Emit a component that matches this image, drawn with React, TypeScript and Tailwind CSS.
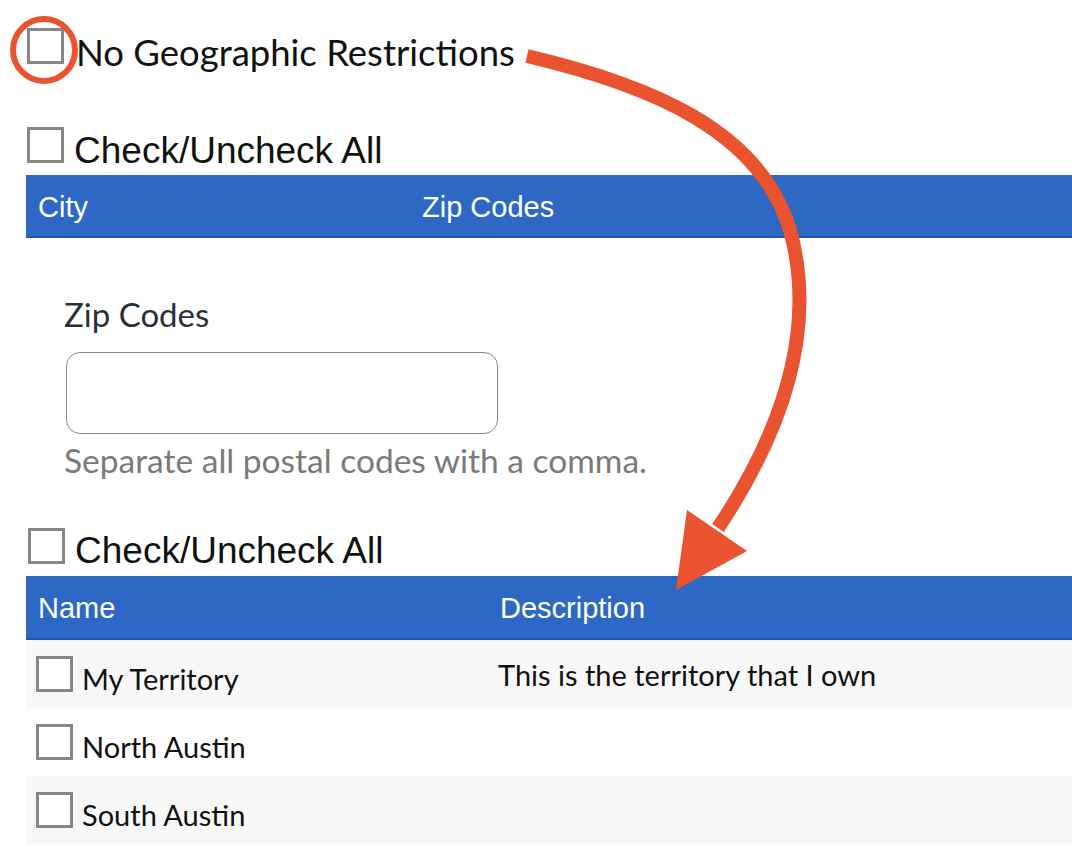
import React from "react";

const Box = ({ size = "w-[37px] h-[36px]" }: { size?: string }) => (
  <span className={`${size} shrink-0 border-[3px] border-[#878787] bg-white`} />
);

const rows = [
  { name: "My Territory", description: "This is the territory that I own" },
  { name: "North Austin", description: "" },
  { name: "South Austin", description: "" },
];

export default function App() {
  return (
    <div className="relative h-[846px] w-[1072px] overflow-hidden bg-white text-black">
      <div className="flex flex-col pl-[26px]">
        <label className="mt-[28px] flex items-center gap-[12px] pl-[1px]">
          <Box />
          <span className="translate-y-[6px] font-['Lato',sans-serif] text-[36.5px] leading-[36px] text-[#111]">
            No Geographic Restrictions
          </span>
        </label>

        <label className="mt-[63px] flex items-center gap-[10px] pl-[1px]">
          <Box />
          <span className="translate-y-[6px] font-['Liberation_Sans',sans-serif] text-[37px] leading-[36px] text-[#111]">
            Check/Uncheck All
          </span>
        </label>

        <div className="mt-[12px] flex h-[63px] items-center border-b-2 border-[#1c55bd] bg-[#2d68c4] font-['Liberation_Sans',sans-serif] text-[29px] text-white">
          <span className="w-[396px] translate-y-[2px] pl-[12px]">City</span>
          <span className="translate-y-[2px]">Zip Codes</span>
        </div>

        <div className="ml-[38px] mt-[56px] flex flex-col">
          <span className="font-['Lato',sans-serif] text-[33px] leading-[40px] text-[#2b2f3a]">Zip Codes</span>
          <div className="ml-[2px] mt-[18px] h-[82px] w-[432px] rounded-[14px] border border-[#8a8a8a]" />
          <span className="mt-[6px] font-['Lato',sans-serif] text-[33.5px] leading-[40px] text-[#7a7a7a]">
            Separate all postal codes with a comma.
          </span>
        </div>

        <label className="mt-[48px] flex items-center gap-[10px] pl-[2px]">
          <Box />
          <span className="translate-y-[5px] font-['Liberation_Sans',sans-serif] text-[37px] leading-[36px] text-[#111]">
            Check/Uncheck All
          </span>
        </label>

        <div className="mt-[12px] flex h-[64px] items-center border-b-2 border-[#1c55bd] bg-[#2d68c4] font-['Liberation_Sans',sans-serif] text-[29px] text-white">
          <span className="w-[474px] translate-y-[2px] pl-[12px]">Name</span>
          <span className="translate-y-[2px]">Description</span>
        </div>

        <div className="flex flex-col font-['Lato',sans-serif] text-[29px] text-[#111]">
          {rows.map((row, i) => (
            <div
              key={row.name}
              className={`flex h-[68px] items-center ${i % 2 === 0 ? "bg-[#f8f8f8]" : "bg-white"}`}
            >
              <label className="flex w-[472px] items-center gap-[9px] pl-[10px]">
                <Box />
                <span className="translate-y-[5px]">{row.name}</span>
              </label>
              <span className="translate-y-[1px]">{row.description}</span>
            </div>
          ))}
        </div>
      </div>

      {/* annotation overlay */}
      <svg className="pointer-events-none absolute left-0 top-0" width="1072" height="846" viewBox="0 0 1072 846">
        <circle cx="44" cy="50" r="31" fill="none" stroke="#e9532f" strokeWidth="6" />
        <path
          d="M527 56 C 650 85 760 130 790 230 C 815 320 790 420 718 528"
          fill="none"
          stroke="#e9532f"
          strokeWidth="14"
        />
        <polygon points="687,510 747,551 676,590" fill="#e9532f" />
      </svg>
    </div>
  );
}
